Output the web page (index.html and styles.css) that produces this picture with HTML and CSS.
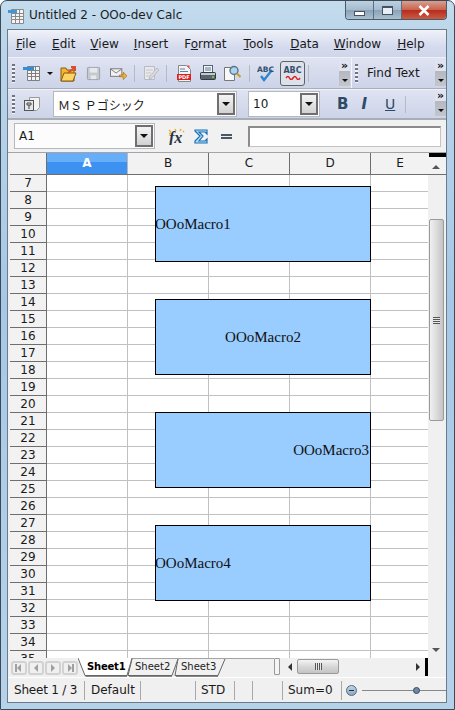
FILE: index.html
```html
<!DOCTYPE html>
<html lang="en">
<head>
  <meta charset="UTF-8">
  <title>Untitled 2 - OOo-dev Calc</title>
  <link rel="stylesheet" href="styles.css">
</head>
<body>
<div class="window">

  <!-- Title bar -->
  <div class="titlebar">
    <svg class="app-icon" width="16" height="16" viewBox="0 0 16 16">
      <path d="M3.500 1.500h12v14h-12zM3.500 5.500h12M3.500 8.500h12M3.500 11.500h12M7.500 1.500v14M11.500 1.500v14" fill="#f4f4f4" stroke="#8a8a8a"/>
      <rect x="0" y="2" width="9" height="3" fill="#3f97d8"/>
    </svg>
    <span class="title">Untitled 2 - OOo-dev Calc</span>
    <div class="controls">
      <div class="ctl"><span class="ctl-min"></span></div>
      <div class="ctl"><span class="ctl-max"></span></div>
      <div class="ctl ctl-close">
        <svg width="12" height="11" viewBox="0 0 12 11"><path d="M1.500 1l9 9M10.500 1l-9 9" stroke="#fff" stroke-width="2.600"/></svg>
      </div>
    </div>
  </div>

  <div class="client">

    <!-- Menu -->
    <div class="menubar">
      <span><u>F</u>ile</span>
      <span><u>E</u>dit</span>
      <span><u>V</u>iew</span>
      <span><u>I</u>nsert</span>
      <span>F<u>o</u>rmat</span>
      <span><u>T</u>ools</span>
      <span><u>D</u>ata</span>
      <span><u>W</u>indow</span>
      <span><u>H</u>elp</span>
    </div>

    <!-- Standard toolbar -->
    <div class="toolbar">
      <div class="grip"></div>
      <div class="tools tools-main">
        <svg class="ico ico-new" width="17" height="16" viewBox="0 0 17 16">
          <path d="M4.500 1.500h12v14h-12zM4.500 5.500h12M4.500 8.500h12M4.500 11.500h12M8.500 1.500v14M12.500 1.500v14" fill="#f4f4f4" stroke="#808080"/>
          <rect x="0" y="2" width="11" height="3" fill="#2f8fd8"/>
        </svg>
        <span class="caret caret-new"></span>
        <svg class="ico ico-open" width="17" height="17" viewBox="0 0 17 17">
          <path d="M1 3h5l1 2h7v11H1z" fill="#f2b632" stroke="#8a5a10"/>
          <path d="M1 16l3-8h12l-3 8z" fill="#fbd564" stroke="#8a5a10"/>
          <path d="M8 8l6-5M11 2h4v4" fill="none" stroke="#d8502a" stroke-width="2"/>
        </svg>
        <svg class="ico ico-save" width="15" height="15" viewBox="0 0 16 16">
          <rect x="1.500" y="1.500" width="13" height="13" rx="1" fill="#c4c8cf" stroke="#9a9ea6"/>
          <rect x="4" y="2" width="8" height="5" fill="#e6e8ec"/>
          <rect x="5" y="10" width="6" height="4" fill="#e6e8ec"/>
        </svg>
        <svg class="ico ico-mail" width="17" height="13" viewBox="0 0 18 13">
          <rect x="0.500" y="1.500" width="12" height="8" fill="#f2f2f2" stroke="#777"/>
          <path d="M1 2l5.500 4 5.500-4" fill="none" stroke="#777"/>
          <path d="M10 8h4V5l4 4-4 4v-3h-4z" fill="#f0b030" stroke="#946412" stroke-width=".6"/>
        </svg>
        <span class="sep sep-a"></span>
        <svg class="ico ico-edit" width="16" height="16" viewBox="0 0 16 16">
          <path d="M1.500 1.500h10v13h-10z" fill="#e8e9ec" stroke="#b8bbc0"/>
          <path d="M3 5h7M3 8h5M3 11h4" stroke="#c4c6ca"/>
          <path d="M7 11l7-8 2 2-7 8-3 1z" fill="#d8d9dc" stroke="#b0b2b6" stroke-width=".7"/>
        </svg>
        <span class="sep sep-b"></span>
        <svg class="ico ico-pdf" width="14" height="17" viewBox="0 0 14 17">
          <path d="M1.500 .5h8l4 4v12h-12z" fill="#f4f4f4" stroke="#888"/>
          <path d="M3 4h5M3 6.500h8" stroke="#5e7fa8"/>
          <rect x="0" y="9" width="14" height="6" fill="#d82020"/>
          <path d="M9.500.5h3v3z" fill="#e05050"/>
          <text x="7" y="14.200" class="pdf-text">PDF</text>
        </svg>
        <svg class="ico ico-print" width="16" height="16" viewBox="0 0 16 16">
          <rect x="3.500" y=".5" width="9" height="7" fill="#f6f6f6" stroke="#5a6470"/>
          <path d="M5 3h6M5 5h6" stroke="#4a7aa8"/>
          <rect x=".5" y="7.500" width="15" height="7" rx="1" fill="#596470" stroke="#333b44"/>
          <rect x="1" y="8" width="14" height="2" fill="#c4c9cf"/>
          <rect x="12" y="11" width="2" height="2" fill="#6dc04a"/>
        </svg>
        <svg class="ico ico-preview" width="17" height="16" viewBox="0 0 17 16">
          <path d="M.5 2.500h7l3 3v10h-10z" fill="#f8f8f8" stroke="#777"/>
          <circle cx="10" cy="5.500" r="4" fill="#a8d4f0" stroke="#5c7488" stroke-width="1.400"/>
          <path d="M13 8.500l3.500 3.500" stroke="#d09a30" stroke-width="2.200"/>
        </svg>
        <span class="sep sep-c"></span>
        <svg class="ico ico-spell" width="17" height="17" viewBox="0 0 17 17">
          <path d="M4 11l3 4 8-10" fill="none" stroke="#2f86cc" stroke-width="2.400"/>
          <text x="0" y="7" class="abc-small">ABC</text>
        </svg>
        <div class="toggle">
          <span class="abc">ABC</span>
          <svg width="16" height="5" viewBox="0 0 16 5"><path d="M1 3q2-3 3.500 0t3.500 0 3.500 0 3.500 0" fill="none" stroke="#e02020" stroke-width="1.500"/></svg>
        </div>
        <span class="sep sep-d"></span>
      </div>
      <div class="more"><span class="chev">»</span><span class="caret"></span></div>
      <span class="tb-split"></span>
      <div class="grip grip-find"></div>
      <span class="find">Find Text</span>
      <div class="more more-end"><span class="chev">»</span><span class="caret"></span></div>
    </div>

    <!-- Formatting toolbar -->
    <div class="toolbar toolbar-fmt">
      <div class="grip"></div>
      <svg class="ico ico-style" width="16" height="16" viewBox="0 0 16 16">
        <path d="M5.500 1.500h10v10l-3 3h-7z" fill="#f2f2f2" stroke="#999"/>
        <rect x=".5" y="4.500" width="9" height="10" fill="#e4e6ea" stroke="#555"/>
        <path d="M3 7h4v2H3zM5 9v4" fill="none" stroke="#444"/>
      </svg>
      <div class="combo combo-font">
        <span class="combo-text combo-jp">ＭＳ Ｐゴシック</span>
        <span class="drop"><span class="caret"></span></span>
      </div>
      <div class="combo combo-size">
        <span class="combo-text">10</span>
        <span class="drop"><span class="caret"></span></span>
      </div>
      <span class="fmt fmt-b">B</span>
      <span class="fmt fmt-i">I</span>
      <span class="fmt fmt-u">U</span>
      <span class="sep sep-e"></span>
      <div class="more more-end more-fmt"><span class="chev">»</span><span class="caret"></span></div>
    </div>

    <!-- Formula bar -->
    <div class="formula">
      <div class="combo combo-name">
        <span class="combo-text">A1</span>
        <span class="drop"><span class="caret"></span></span>
      </div>
      <svg class="ico ico-fx" width="18" height="17" viewBox="0 0 18 17">
        <path d="M1 2l2 2M3 5l-2 1M7 1l1 2M13 1l-1 2M15 3l1 1" stroke="#e8b030" stroke-width="1.500"/>
        <text x="1" y="15" class="fx-text">fx</text>
      </svg>
      <svg class="ico ico-sum" width="14" height="15" viewBox="0 0 14 15">
        <path d="M1 1h12v4l-2-2H5l4 4-4 5h6l2-2v4H1v-2l5-5-5-5z" fill="#b8def4" stroke="#1a70b8" stroke-width="1.200"/>
      </svg>
      <span class="equals"></span>
      <div class="input-line"></div>
    </div>

    <!-- Sheet -->
    <div class="sheet">
      <div class="col-heads">
        <div class="corner"></div>
        <div class="col col-on">A</div>
        <div class="col">B</div>
        <div class="col">C</div>
        <div class="col">D</div>
        <div class="col col-e">E</div>
        <div class="split-top"></div>
      </div>
      <div class="sheet-body">
        <div class="row-heads">
          <div>7</div><div>8</div><div>9</div><div>10</div><div>11</div><div>12</div><div>13</div>
          <div>14</div><div>15</div><div>16</div><div>17</div><div>18</div><div>19</div><div>20</div>
          <div>21</div><div>22</div><div>23</div><div>24</div><div>25</div><div>26</div><div>27</div>
          <div>28</div><div>29</div><div>30</div><div>31</div><div>32</div><div>33</div><div>34</div>
          <div>35</div>
        </div>
        <div class="cells">
          <div class="shape shape-1">OOoMacro1</div>
          <div class="shape shape-2">OOoMacro2</div>
          <div class="shape shape-3">OOoMacro3</div>
          <div class="shape shape-4">OOoMacro4</div>
        </div>
        <div class="vscroll">
          <span class="arrow-up"></span>
          <div class="vthumb"><span class="grip-lines"></span></div>
          <span class="arrow-down"></span>
        </div>
      </div>
      <div class="tabbar">
        <div class="nav-btns">
          <span class="nav"><i class="tri tri-l bar-l"></i></span>
          <span class="nav"><i class="tri tri-l"></i></span>
          <span class="nav"><i class="tri tri-r"></i></span>
          <span class="nav"><i class="tri tri-r bar-r"></i></span>
        </div>
        <div class="tabs">
          <svg class="tab-shapes" width="148" height="19" viewBox="0 0 148 19">
            <path d="M54 .5H147.500L140 17.500H97L100 .5L94 17.500H50L54 .5" fill="#f0f0f0" stroke="none"/>
            <path d="M54 .5H148" fill="none" stroke="#a4a4a4"/>
            <path d="M100 1L97 17.500H140L147 1" fill="#f1f1f1" stroke="#666"/>
            <path d="M54 1L50 17.500H94L100 1" fill="#f1f1f1" stroke="#666"/>
            <path d="M0 0L7 17.500H49L54 0" fill="#fff" stroke="#666"/>
            <path d="M7.500 18.500H49M51 18.500H94M98 18.500H140" stroke="#888"/>
          </svg>
          <span class="tab tab-on">Sheet1</span>
          <span class="tab">Sheet2</span>
          <span class="tab">Sheet3</span>
        </div>
        <div class="tab-fill"></div>
        <div class="tab-handle"></div>
        <div class="hscroll">
          <span class="arrow-left"></span>
          <div class="hthumb"><span class="grip-lines-h"></span></div>
          <span class="arrow-right"></span>
        </div>
        <div class="split-right"></div>
      </div>
    </div>

    <!-- Status bar -->
    <div class="statusbar">
      <span class="st st-sheet">Sheet 1 / 3</span>
      <span class="st st-style">Default</span>
      <span class="st st-blank"></span>
      <span class="st st-mode">STD</span>
      <span class="st st-ins"></span>
      <span class="st st-sel"></span>
      <span class="st st-sum">Sum=0</span>
      <div class="zoom">
        <span class="zoom-minus"></span>
        <span class="zoom-line"><i class="zoom-knob"></i></span>
      </div>
    </div>

  </div>
</div>
</body>
</html>
```

FILE: styles.css
```css
* {
  box-sizing: border-box;
}

html, body {
  margin: 0;
  height: 100%;
}

body {
  font-family: "DejaVu Sans", sans-serif;
  font-size: 12px;
  color: #1a1a1a;
  background: #fff;
  overflow: hidden;
}

.window {
  width: 455px;
  height: 710px;
  padding: 0 7px 6px 6px;
  border: 1px solid #3c4a58;
  border-radius: 7px 7px 0 0;
  background: linear-gradient(180deg, #c4dcee 0, #bcd6ea 30px, #a6c8e6 300px, #b6d2ea 100%);
  display: flex;
  flex-direction: column;
}

/* Title bar */

.titlebar {
  height: 28px;
  flex: none;
  display: flex;
  align-items: flex-start;
  position: relative;
}

.app-icon {
  margin: 7px 0 0 1px;
}

.title {
  margin: 7px 0 0 5px;
  font-size: 12px;
  color: #1d1d1d;
}

.controls {
  margin-left: auto;
  display: flex;
  height: 19px;
  width: 102px;
  border: 1px solid #4c5a68;
  border-top: 0;
  border-radius: 0 0 4px 4px;
  overflow: hidden;
}

.ctl {
  width: 28px;
  background: linear-gradient(180deg, #bcd0e0 0, #a4bace 50%, #8aa2b6 51%, #aac0d2 100%);
  border-right: 1px solid #5d6e7e;
  display: flex;
  align-items: center;
  justify-content: center;
}

.ctl-close {
  flex: 1;
  border-right: 0;
  background: linear-gradient(180deg, #d8a090 0, #c8604c 50%, #b82c1c 51%, #c85c44 100%);
}

.ctl-min {
  width: 11px;
  height: 5px;
  margin-top: 6px;
  border: 1px solid #46525e;
  background: #fff;
}

.ctl-max {
  width: 11px;
  height: 9px;
  border: 1px solid #46525e;
  border-top-width: 2px;
  background: #e8eef4;
}

/* Client area */

.client {
  flex: 1;
  display: flex;
  flex-direction: column;
  min-height: 0;
  border: 1px solid #6b7b8a;
  background: #f0f0f0;
}

.menubar {
  height: 28px;
  flex: none;
  display: flex;
  align-items: center;
  padding-left: 8px;
  gap: 16px;
  background: linear-gradient(180deg, #f0f2f8 0, #d6dcef 60%, #cfd6ea 100%);
  font-size: 12px;
  border-bottom: 1px solid #eef0f6;
}

.menubar span:nth-child(3) { margin-left: -1px; }
.menubar span:nth-child(4) { margin-left: -1px; }
.menubar span:nth-child(6) { margin-left: 1px; }
.menubar span:nth-child(7) { margin-left: 1px; }
.menubar span:nth-child(8) { margin-left: -1px; }

.toolbar {
  height: 31px;
  flex: none;
  display: flex;
  align-items: center;
  background: linear-gradient(180deg, #dfe3f2 0, #cdd4e8 100%);
  border-bottom: 1px solid #a9adb6;
}

.toolbar-fmt {
  border-bottom: 2px solid #a9adb6;
  border-top: 1px solid #f2f3f8;
}

.grip {
  width: 3px;
  height: 19px;
  margin-left: 4px;
  flex: none;
  background: repeating-linear-gradient(180deg, #6d7380 0 2px, #f2f4f8 2px 4px);
}

.tb-split {
  width: 1px;
  align-self: stretch;
  margin-left: 1px;
  background: #f4f5fa;
  flex: none;
}

.grip-find {
  margin-left: 3px;
}

.tools {
  display: flex;
  align-items: center;
  flex: none;
}

.tools-main {
  width: 324px;
  padding-left: 8px;
}

.ico {
  flex: none;
}

.ico-open { margin-left: 7px; }
.ico-save { margin-left: 9px; }
.ico-mail { margin-left: 9px; }
.ico-edit { margin-left: 8px; }
.ico-pdf { margin-left: 10px; }
.ico-print { margin-left: 9px; }
.ico-preview { margin-left: 8px; }
.ico-spell { margin-left: 7px; }

.sep {
  width: 1px;
  height: 17px;
  background: #b6bac6;
  flex: none;
}

.sep-a { margin-left: 7px; }
.sep-b { margin-left: 7px; }
.sep-c { margin-left: 8px; }
.sep-d { margin-left: 3px; }

.caret {
  display: block;
  width: 0;
  height: 0;
  border-left: 3px solid transparent;
  border-right: 3px solid transparent;
  border-top: 3px solid #111;
}

.caret-new {
  margin-left: 7px;
}

.abc-small {
  font-size: 7.500px;
  font-weight: bold;
  fill: #33506e;
}

.pdf-text {
  font-size: 5px;
  font-weight: bold;
  fill: #fff;
  text-anchor: middle;
}

.toggle {
  width: 25px;
  height: 25px;
  margin-left: 6px;
  border: 1px solid #5b6268;
  border-radius: 3px;
  background: #dde1ea;
  display: flex;
  flex-direction: column;
  align-items: center;
  padding-top: 4px;
  flex: none;
}

.abc {
  font-size: 8px;
  font-weight: bold;
  line-height: 9px;
  color: #33506e;
}

.more {
  width: 11px;
  height: 25px;
  flex: none;
  background: linear-gradient(180deg, #dfe3f2 0 10px, #b5b8bf 10px, #c4c6cc 100%);
  display: flex;
  flex-direction: column;
  align-items: center;
  justify-content: space-between;
  padding-bottom: 4px;
}

.chev {
  font-size: 11px;
  line-height: 9px;
  font-weight: bold;
  color: #111;
}

.more-end {
  margin-left: auto;
}

.more-fmt {
  margin-top: -1px;
}

.find {
  margin-left: 9px;
  font-size: 12px;
}

.ico-style {
  margin-left: 9px;
}

.combo {
  background: #fff;
  border: 1px solid #b4b8c0;
  display: flex;
  align-items: center;
  flex: none;
}

.combo-font {
  width: 184px;
  margin-left: 13px;
  height: 26px;
}

.combo-size {
  width: 72px;
  margin-left: 11px;
  height: 26px;
}

.combo-text {
  padding-left: 4px;
  flex: 1;
  font-size: 12px;
}

.combo-jp {
  font-family: "Noto Sans CJK JP", sans-serif;
}

.drop {
  width: 18px;
  height: 22px;
  margin-right: 1px;
  border: 2px solid #6f6f6f;
  background: linear-gradient(180deg, #f4f4f4, #d2d2d2);
  display: flex;
  align-items: center;
  justify-content: center;
  flex: none;
}

.drop .caret {
  border-left-width: 4px;
  border-right-width: 4px;
  border-top-width: 4px;
}

.fmt {
  font-size: 14px;
  color: #2e4a66;
  flex: none;
}

.fmt-b {
  margin-left: 17px;
  font-weight: bold;
  font-size: 15px;
}

.fmt-i {
  margin-left: 13px;
  font-style: italic;
  font-weight: bold;
  font-size: 15px;
}

.fmt-u {
  margin-left: 18px;
  text-decoration: underline;
}

.sep-e {
  margin-left: 10px;
}

/* Formula bar */

.formula {
  height: 33px;
  flex: none;
  display: flex;
  align-items: center;
  background: #f1f1f1;
  border-bottom: 1px solid #a4a4a4;
  padding-left: 6px;
}

.combo-name {
  width: 141px;
  height: 26px;
  background: #fcfcfc;
}

.ico-fx {
  margin-left: 13px;
}

.fx-text {
  font-family: "Liberation Serif", serif;
  font-style: italic;
  font-weight: bold;
  font-size: 16px;
  fill: #2a3440;
}

.ico-sum {
  margin-left: 8px;
}

.equals {
  width: 11px;
  height: 5px;
  margin-left: 13px;
  border-top: 2px solid #4a5866;
  border-bottom: 2px solid #4a5866;
  flex: none;
}

.input-line {
  height: 21px;
  margin-left: 16px;
  border: 1px solid #c4c4c4;
  border-top: 2px solid #8c8c8c;
  border-left: 2px solid #8c8c8c;
  background: #fff;
  flex: 1;
  margin-right: 5px;
}

/* Sheet */

.sheet {
  height: 524px;
  flex: none;
  display: flex;
  flex-direction: column;
  padding-left: 2px;
  background: #f0f0f0;
}

.col-heads {
  height: 22px;
  flex: none;
  display: flex;
  background: #f2f2f2;
  border-bottom: 1px solid #6e6e6e;
}

.corner {
  width: 37px;
  border-right: 1px solid #6e6e6e;
  flex: none;
}

.col {
  width: 81px;
  flex: none;
  border-right: 1px solid #6e6e6e;
  text-align: center;
  line-height: 21px;
  font-size: 12px;
}

.col-on {
  color: #fff;
  font-weight: bold;
  background: linear-gradient(180deg, #66aff8 0 9px, #3d91f0 9px);
  border-right: 1px solid #b8b8b8;
}

.col-e {
  width: 58px;
  border-right: 0;
}

.split-top {
  width: 17px;
  height: 4px;
  background: #000;
  flex: none;
}

.sheet-body {
  flex: 1;
  display: flex;
  min-height: 0;
}

.row-heads {
  width: 37px;
  flex: none;
  overflow: hidden;
  background: #f2f2f2;
  border-right: 1px solid #6e6e6e;
}

.row-heads div {
  height: 17px;
  line-height: 16px;
  text-align: center;
  border-bottom: 1px solid #6e6e6e;
  font-size: 12px;
}

.cells {
  width: 381px;
  flex: none;
  position: relative;
  overflow: hidden;
  background-color: #fff;
  background-image:
    repeating-linear-gradient(180deg, transparent 0 16px, #c0c0c0 16px 17px),
    repeating-linear-gradient(90deg, transparent 0 80px, #c0c0c0 80px 81px);
}

.shape {
  position: absolute;
  left: 108px;
  width: 216px;
  height: 76px;
  background: #99ccff;
  border: 1px solid #000;
  display: flex;
  align-items: center;
  font-family: "Liberation Serif", serif;
  font-size: 15px;
  color: #111;
  white-space: nowrap;
}

.shape-1 { top: 11px; text-indent: -1px; }
.shape-2 { top: 124px; justify-content: center; }
.shape-3 { top: 237px; justify-content: flex-end; padding-right: 1px; }
.shape-4 { top: 350px; text-indent: -1px; }

.vscroll {
  width: 17px;
  flex: none;
  background: #f0f0f0;
  position: relative;
}

.arrow-up, .arrow-down, .arrow-left, .arrow-right {
  position: absolute;
  width: 0;
  height: 0;
}

.arrow-up {
  top: -10px;
  left: 4px;
  border-left: 4px solid transparent;
  border-right: 4px solid transparent;
  border-bottom: 4px solid #555;
}

.arrow-down {
  top: 473px;
  left: 4px;
  border-left: 4px solid transparent;
  border-right: 4px solid transparent;
  border-top: 4px solid #555;
}

.vthumb {
  position: absolute;
  top: 44px;
  left: 1px;
  width: 15px;
  height: 202px;
  border: 1px solid #9a9a9a;
  border-radius: 2px;
  background: linear-gradient(90deg, #f0f0f0, #dcdcdc 50%, #c4c4c4);
  display: flex;
  align-items: center;
  justify-content: center;
}

.grip-lines {
  width: 7px;
  height: 7px;
  background: repeating-linear-gradient(180deg, #555 0 1px, #e8e8e8 1px 2px);
}

.tabbar {
  height: 19px;
  flex: none;
  display: flex;
  align-items: flex-start;
  background: #f0f0f0;
}

.nav-btns {
  display: flex;
  gap: 1px;
  padding: 3px 0 0 1px;
  flex: none;
}

.nav {
  width: 16px;
  height: 14px;
  border: 2px solid #d2d2d2;
  border-radius: 3px;
  background: #f0f0f0;
  display: flex;
  align-items: center;
  justify-content: center;
}

.tri {
  width: 0;
  height: 0;
  border-top: 4px solid transparent;
  border-bottom: 4px solid transparent;
}

.tri-l { border-right: 4px solid #a0a0a0; }
.tri-r { border-left: 4px solid #a0a0a0; }
.bar-l { box-shadow: -2px 0 0 0 #a0a0a0; }
.bar-r { box-shadow: 2px 0 0 0 #a0a0a0; }

/* the tab outlines are one drawing, the labels sit on top of it */
.tabs {
  width: 147px;
  height: 19px;
  position: relative;
  display: flex;
  padding-left: 9px;
  flex: none;
}

.tab-shapes {
  position: absolute;
  left: 0;
  top: 0;
}

.tab {
  position: relative;
  width: 46px;
  font-size: 10px;
  line-height: 17px;
  color: #222;
  white-space: nowrap;
  flex: none;
}

.tab-on {
  width: 48px;
  font-weight: bold;
  color: #000;
  letter-spacing: -.2px;
}

.tab-fill {
  width: 49px;
  height: 19px;
  border-top: 1px solid #a4a4a4;
  flex: none;
}

.tab-handle {
  width: 6px;
  height: 17px;
  border: 1px solid #999;
  border-radius: 1px;
  background: #f4f4f4;
  flex: none;
}

.hscroll {
  width: 145px;
  height: 17px;
  position: relative;
  flex: none;
  margin-top: 1px;
}

.arrow-left {
  left: 8px;
  top: 4px;
  border-top: 4px solid transparent;
  border-bottom: 4px solid transparent;
  border-right: 4px solid #333;
}

.arrow-right {
  right: 5px;
  top: 4px;
  border-top: 4px solid transparent;
  border-bottom: 4px solid transparent;
  border-left: 4px solid #333;
}

.hthumb {
  position: absolute;
  left: 17px;
  top: 0;
  width: 42px;
  height: 15px;
  border: 1px solid #9a9a9a;
  border-radius: 2px;
  background: linear-gradient(180deg, #f4f4f4, #d8d8d8 50%, #c4c4c4);
  display: flex;
  align-items: center;
  justify-content: center;
}

.grip-lines-h {
  width: 7px;
  height: 7px;
  background: repeating-linear-gradient(90deg, #555 0 1px, #e8e8e8 1px 2px);
}

.split-right {
  width: 3px;
  height: 18px;
  background: #000;
  flex: none;
}

/* Status bar */

.statusbar {
  flex: 1;
  min-height: 0;
  display: flex;
  align-items: center;
  background: #f0f0f0;
  border-top: 1px solid #fff;
  font-size: 12px;
  padding-left: 3px;
}

.st {
  height: 19px;
  line-height: 18px;
  padding-left: 6px;
  border-right: 1px solid #a8a8a8;
  flex: none;
  white-space: nowrap;
}

.st-sheet { width: 74px; padding-left: 3px; letter-spacing: -.2px; }
.st-style { width: 56px; }
.st-blank { width: 55px; }
.st-mode { width: 39px; padding-left: 5px; }
.st-ins { width: 18px; }
.st-sel { width: 30px; }
.st-sum { width: 59px; padding-left: 5px; }

.zoom {
  flex: 1;
  display: flex;
  align-items: center;
  padding-left: 4px;
  overflow: hidden;
}

.zoom-minus {
  width: 11px;
  height: 11px;
  border-radius: 50%;
  border: 1px solid #53687c;
  background: linear-gradient(180deg, #c2d4e6, #8aa8c4);
  flex: none;
  position: relative;
}

.zoom-minus::after {
  content: "";
  position: absolute;
  left: 2px;
  top: 4px;
  width: 5px;
  height: 1px;
  background: #233;
}

.zoom-line {
  flex: 1;
  height: 1px;
  margin-left: 5px;
  background: #888;
  position: relative;
}

.zoom-knob {
  position: absolute;
  left: 51px;
  top: -3px;
  width: 7px;
  height: 7px;
  border-radius: 50%;
  background: #6a8aa8;
  border: 1px solid #3a4a5a;
}
```
